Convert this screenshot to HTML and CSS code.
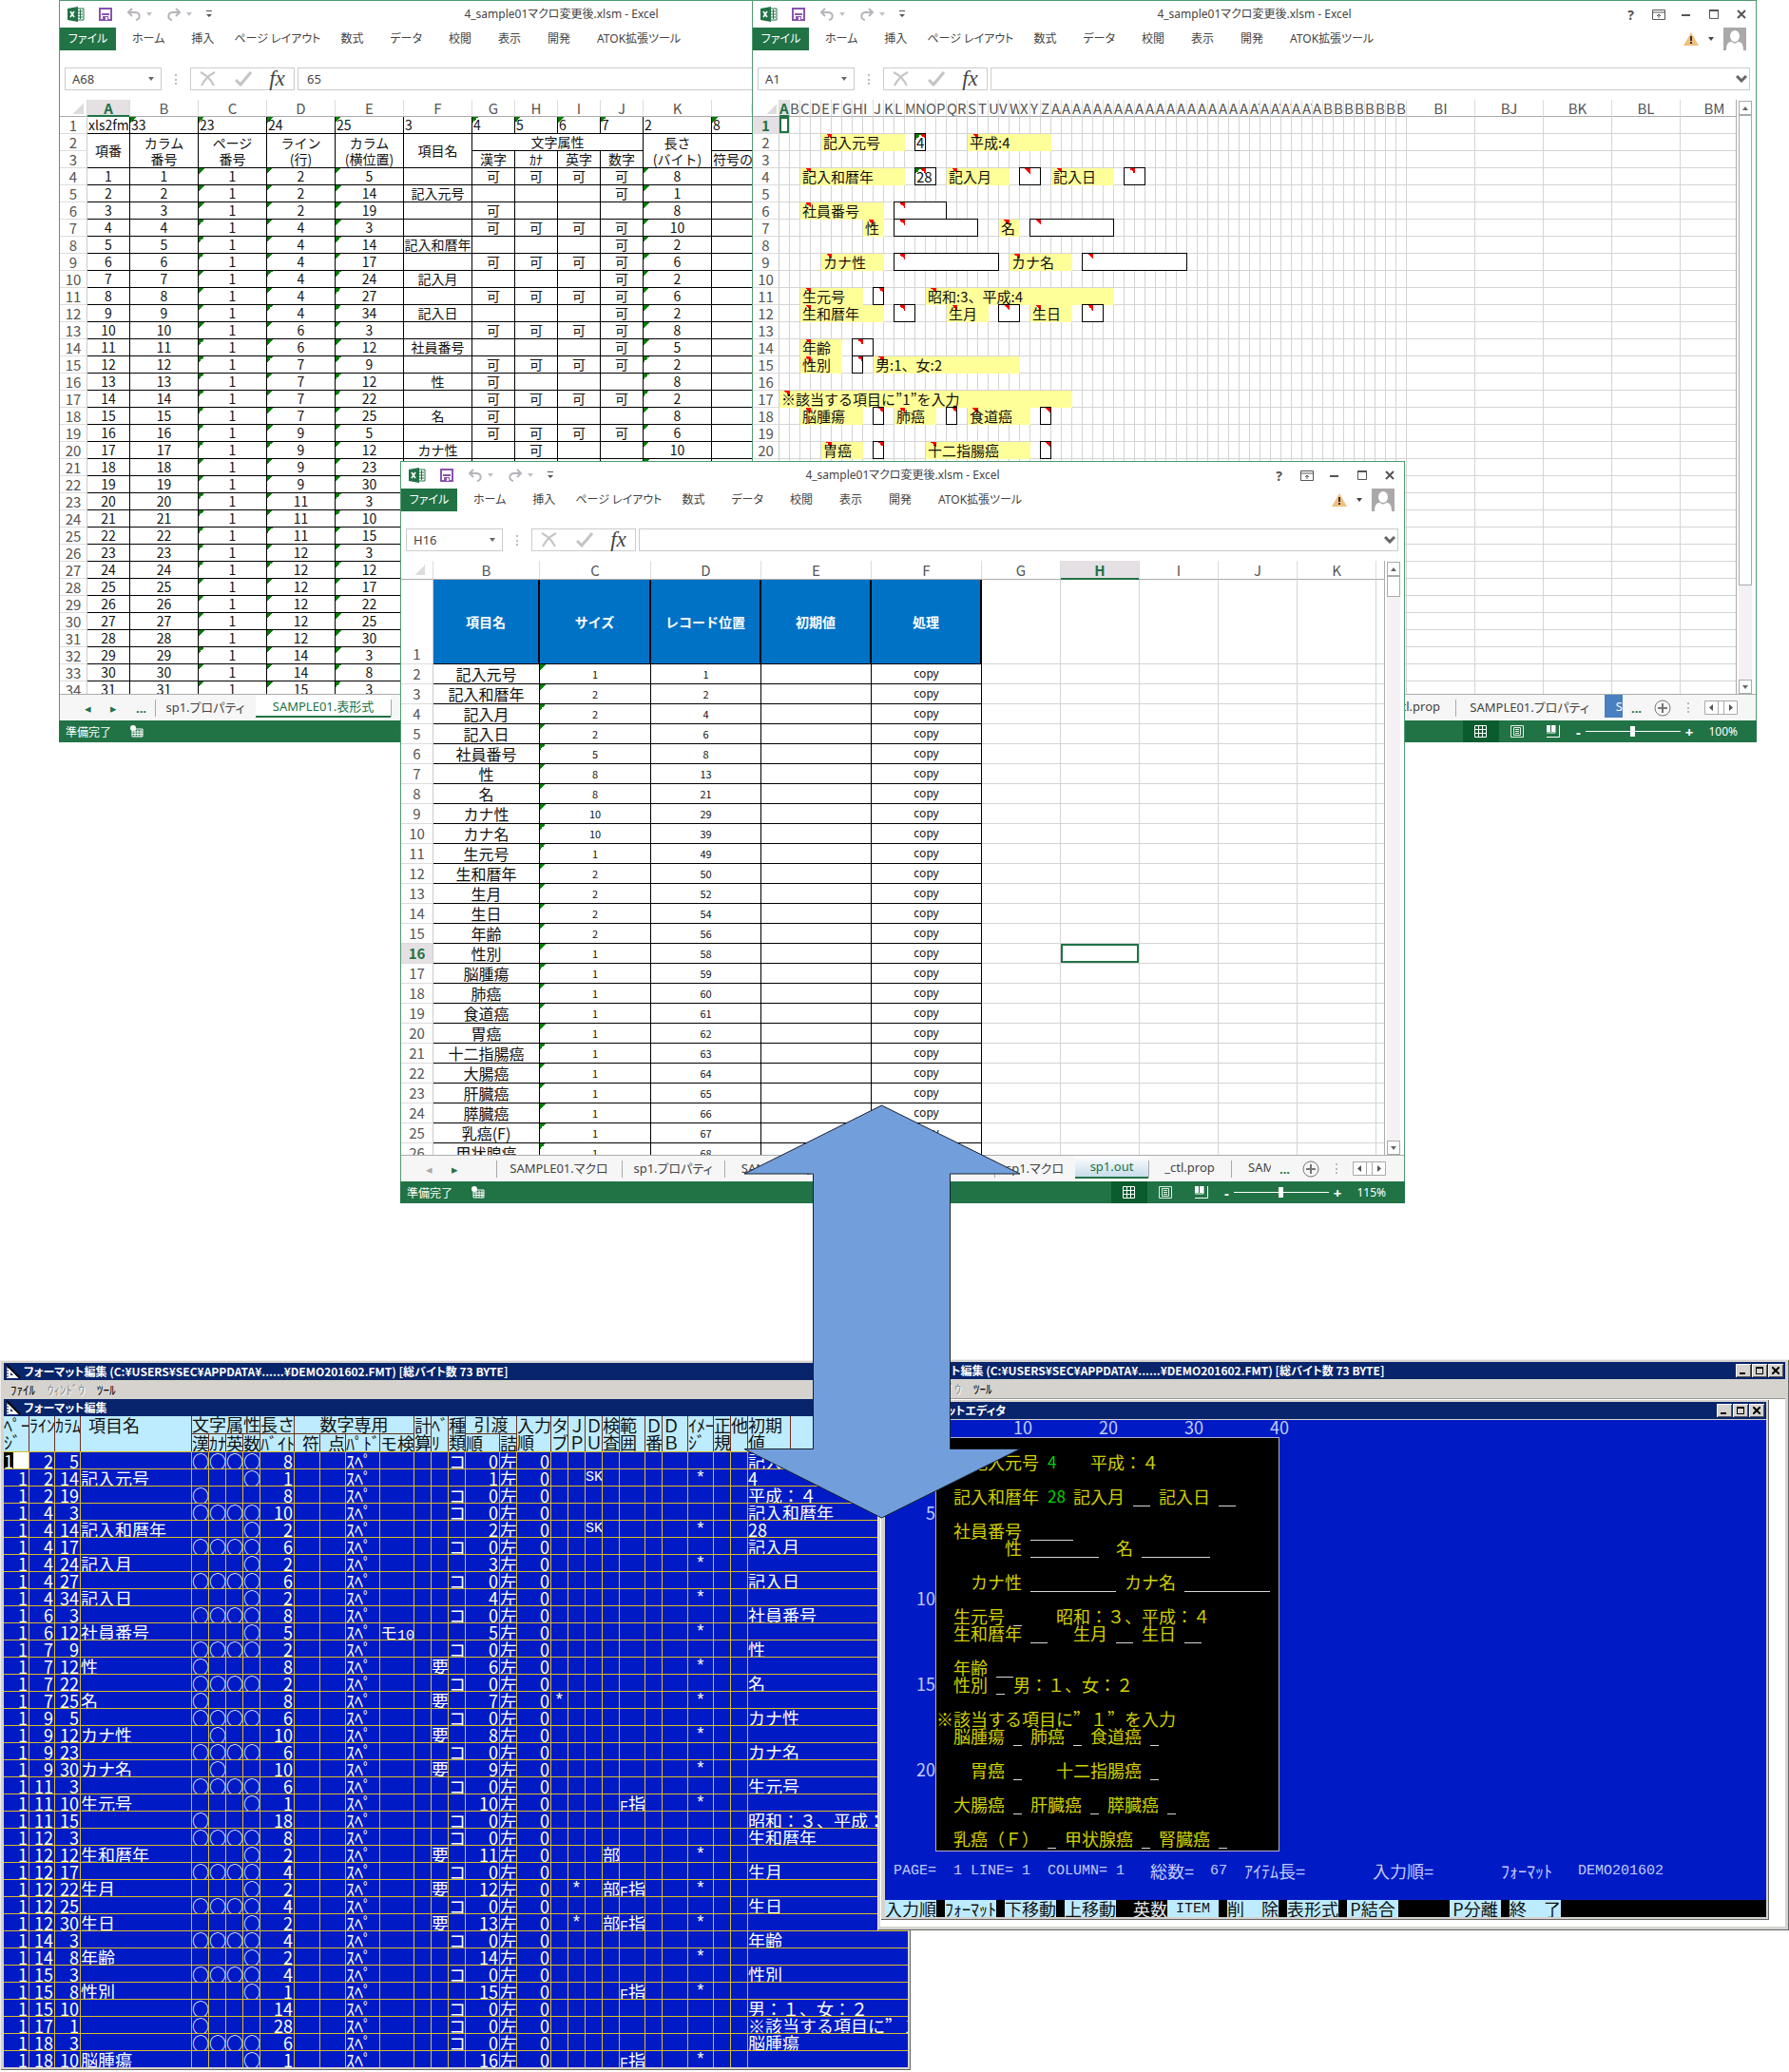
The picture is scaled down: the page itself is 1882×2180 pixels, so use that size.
FILE: index.html
```html
<!DOCTYPE html>
<html lang="ja">
<head>
<meta charset="utf-8">
<title>フォーマット編集と Excel シート</title>
<link rel="stylesheet" href="styles.css">
</head>
<body>
<svg class="defs" aria-hidden="true">
  <symbol id="i-excel" viewBox="0 0 18 16"><path d="M10 2h7v12h-7z" fill="#fff" stroke="#217346"/><path d="M11 5h5M11 8h5M11 11h5M13.500 3v10" stroke="#217346" fill="none"/><path d="M0 2l11-2v16L0 14z" fill="#217346"/><path d="M3 5l4 6M7 5l-4 6" stroke="#fff" stroke-width="1.600"/></symbol>
  <symbol id="i-save" viewBox="0 0 14 14"><path d="M1 1h12v12H1z" fill="#fff" stroke="#8a52b0" stroke-width="2"/><path d="M3 7h8" stroke="#8a52b0" stroke-width="2"/><path d="M4 9h6v4H4z" fill="#8a52b0"/><path d="M7 10h2v3H7z" fill="#fff"/></symbol>
  <symbol id="i-undo" viewBox="0 0 16 14"><path d="M6 1L2 5l4 4M2 5h7c6 0 6 7 1 8" fill="none" stroke="#b8b3ba" stroke-width="2"/></symbol>
  <symbol id="i-redo" viewBox="0 0 16 14"><path d="M10 1l4 4-4 4M14 5H7c-6 0-6 7-1 8" fill="none" stroke="#b8b3ba" stroke-width="2"/></symbol>
  <symbol id="i-caret" viewBox="0 0 6 4"><path d="M0 0h6L3 4z" fill="currentColor"/></symbol>
  <symbol id="i-more" viewBox="0 0 6 8"><path d="M0 0h6v1H0zM0 4h6L3 7z" fill="#555"/></symbol>
  <symbol id="i-ribbon" viewBox="0 0 14 11"><path d="M.5.5h13v10H.5zM1 3h12M7 9V5M5 7l2-2 2 2" fill="none" stroke="#555"/></symbol>
  <symbol id="i-min" viewBox="0 0 10 10"><path d="M0 5h9v2H0z" fill="#555"/></symbol>
  <symbol id="i-max" viewBox="0 0 10 10"><path d="M.5.5h9v9h-9z" fill="none" stroke="#555"/><path d="M0 0h10v2H0z" fill="#555"/></symbol>
  <symbol id="i-close" viewBox="0 0 10 10"><path d="M1 1l8 8M9 1L1 9" stroke="#555" stroke-width="2"/></symbol>
  <symbol id="i-warn" viewBox="0 0 16 14"><path d="M8 0l8 14H0z" fill="#f0c080"/><path d="M7 4h2v5H7zM7 10h2v2H7z" fill="#333"/></symbol>
  <symbol id="i-user" viewBox="0 0 24 24"><path d="M0 0h24v24H0z" fill="#aaa8a8"/><ellipse cx="12" cy="9" rx="5" ry="6" fill="#fff"/><path d="M3 24c0-8 3-9 6-9 2 2 4 2 6 0 3 0 6 1 6 9z" fill="#fff"/></symbol>
  <symbol id="i-cancel" viewBox="0 0 18 16"><path d="M1 1c6 3 11 8 14 14M16 1C10 4 5 9 2 15" fill="none" stroke="#c4c4c4" stroke-width="2"/></symbol>
  <symbol id="i-check" viewBox="0 0 18 16"><path d="M1 9l5 5L17 1" fill="none" stroke="#c4c4c4" stroke-width="3"/></symbol>
  <symbol id="i-chev" viewBox="0 0 12 8"><path d="M1 1l5 5 5-5" fill="none" stroke="#666" stroke-width="3"/></symbol>
  <symbol id="i-macro" viewBox="0 0 14 13"><path d="M2 4h11v8H2z" fill="none" stroke="#fff"/><path d="M2 7h11M2 9.500h11M5 5v7M8 5v7M11 5v7" stroke="#fff"/><circle cx="3" cy="3" r="3" fill="#fff"/></symbol>
  <symbol id="i-grid" viewBox="0 0 14 13"><path d="M.5.5h12v12H.5zM0 4.500h13M0 8.500h13M4.500 0v13M8.500 0v13" fill="none" stroke="#fff"/></symbol>
  <symbol id="i-page" viewBox="0 0 14 13"><path d="M.5.5h13v12H.5zM3.500 2.500h7v8h-7zM5 4.500h4M5 6.500h4M5 8.500h4" fill="none" stroke="#e4f0e8"/></symbol>
  <symbol id="i-break" viewBox="0 0 14 13"><path d="M0 0h4v7H0zM5 0h4v7H5z" fill="#fff"/><path d="M0 12.500h13.500V0" fill="none" stroke="#fff"/><path d="M0 8h9v-8" fill="none" stroke="#fff"/></symbol>
  <symbol id="i-tri" viewBox="0 0 16 16"><path d="M1 1l14 14H1z" fill="#fff"/><path d="M1 1l14 14" stroke="#000" stroke-width="2"/><path d="M5 9l3 3H5z" fill="#0a246a"/><path d="M1 4h2M1 7h2M1 10h2M1 13h2" stroke="#000"/></symbol>
</svg>

<main class="desktop" id="desktop">
  <section class="app app-list" aria-label="フォーマット編集">
    <header class="app-title"><svg width="16" height="16"><use href="#i-tri"/></svg>フォーマット編集 (C:¥USERS¥SEC¥APPDATA¥......¥DEMO201602.FMT) [総バイト数 73 BYTE]</header>
    <nav class="app-menu"><button>ﾌｧｲﾙ</button><button disabled>ｳｨﾝﾄﾞｳ</button><button>ﾂｰﾙ</button></nav>
    <header class="app-title"><svg width="16" height="16"><use href="#i-tri"/></svg>フォーマット編集</header>
    <div class="list-view">
      <table class="fmt">
        <colgroup id="fmt-cols"></colgroup>
        <thead>
          <tr>
            <th rowspan="2">ﾍﾟｰ<br>ｼﾞ</th><th rowspan="2">ﾗｲﾝ</th><th rowspan="2">ｶﾗﾑ</th><th rowspan="2" class="name">項目名</th>
            <th colspan="4" class="under">文字属性</th><th class="under">長さ</th><th colspan="4" class="under mid">数字専用</th>
            <th rowspan="2">計<br>算</th><th rowspan="2">ﾍﾞ<br>ﾘ</th><th rowspan="2">種<br>類</th>
            <th colspan="2" class="under mid">引渡</th><th rowspan="2">入力<br>順</th>
            <th rowspan="2">タ<br>ブ</th><th rowspan="2">Ｊ<br>Ｐ</th><th rowspan="2">Ｄ<br>Ｕ</th><th rowspan="2">検<br>査</th><th rowspan="2">範<br>囲</th>
            <th rowspan="2">Ｄ<br>番</th><th rowspan="2">Ｄ<br>Ｂ</th><th rowspan="2">ｲﾒｰ<br>ｼﾞ</th><th rowspan="2">正<br>規</th><th rowspan="2">他</th><th rowspan="2">初期<br>値</th><th rowspan="2"></th>
          </tr>
          <tr><th>漢</th><th>ｶﾅ</th><th>英</th><th>数</th><th>ﾊﾞｲﾄ</th><th class="end">符</th><th class="end">点</th><th>ﾊﾟﾄﾞ</th><th>モ検</th><th>順</th><th>詰</th></tr>
        </thead>
        <tbody id="fmt-rows"></tbody>
      </table>
    </div>
  </section>

  <section class="app app-editor" aria-label="フォーマットエディタ">
    <header class="app-title"><svg width="16" height="16"><use href="#i-tri"/></svg>フォーマット編集 (C:¥USERS¥SEC¥APPDATA¥......¥DEMO201602.FMT) [総バイト数 73 BYTE]
      <span class="win-btns"><button aria-label="最小化"><svg width="8" height="8"><path d="M0 6h6v2H0z"/></svg></button><button aria-label="最大化"><svg width="8" height="8"><path d="M0 0h8v8H0zM1 2v5h6V2z" fill-rule="evenodd"/></svg></button><button aria-label="閉じる"><svg width="8" height="8"><path d="M0 0l8 8M8 0L0 8" stroke="#000" stroke-width="2"/></svg></button></span>
    </header>
    <nav class="app-menu"><button>ﾌｧｲﾙ</button><button disabled>ｳｨﾝﾄﾞｳ</button><button>ﾂｰﾙ</button></nav>
    <div class="mdi">
      <div class="child">
        <header class="app-title"><svg width="16" height="16"><use href="#i-tri"/></svg>フォーマットエディタ
          <span class="win-btns"><button aria-label="最小化"><svg width="8" height="8"><path d="M0 6h6v2H0z"/></svg></button><button aria-label="最大化"><svg width="8" height="8"><path d="M0 0h8v8H0zM1 2v5h6V2z" fill-rule="evenodd"/></svg></button><button aria-label="閉じる"><svg width="8" height="8"><path d="M0 0l8 8M8 0L0 8" stroke="#000" stroke-width="2"/></svg></button></span>
        </header>
        <div class="screen">
          <div class="ruler" id="ruler"></div>
          <div class="editor"><div class="lines" id="lines"></div><div class="canvas" id="canvas"></div></div>
          <div class="info" id="info"></div>
          <div class="keys" id="keys"></div>
        </div>
      </div>
    </div>
  </section>

  <svg class="arrow" width="292" height="436" viewBox="0 0 292 436" role="img" aria-label="双方向の矢印"><path d="M145.500 1L291 73H217.500V362.500H291L145.500 435 1 362.500H73.500V73H1z" fill="#729fdc" stroke="#16202e"/></svg>
</main>

<template id="excel">
  <section class="xl">
    <header class="xl-title">
      <div class="qat">
        <svg width="18" height="16"><use href="#i-excel"/></svg>
        <button class="save" aria-label="上書き保存"><svg width="14" height="14"><use href="#i-save"/></svg></button>
        <button aria-label="元に戻す"><svg width="16" height="14"><use href="#i-undo"/></svg><svg class="pale" width="6" height="4"><use href="#i-caret"/></svg></button>
        <button aria-label="やり直し"><svg width="16" height="14"><use href="#i-redo"/></svg><svg class="pale" width="6" height="4"><use href="#i-caret"/></svg></button>
        <button aria-label="カスタマイズ"><svg width="6" height="8"><use href="#i-more"/></svg></button>
      </div>
      <h1>4_sample01マクロ変更後.xlsm - Excel</h1>
      <div class="xl-btns"><button aria-label="ヘルプ">?</button><button aria-label="リボン表示"><svg width="14" height="11"><use href="#i-ribbon"/></svg></button><button aria-label="最小化"><svg width="10" height="10"><use href="#i-min"/></svg></button><button aria-label="最大化"><svg width="10" height="10"><use href="#i-max"/></svg></button><button aria-label="閉じる"><svg width="10" height="10"><use href="#i-close"/></svg></button></div>
    </header>
    <nav class="ribbon">
      <button class="file">ファイル</button><button>ホーム</button><button>挿入</button><button class="tight">ページ レイアウト</button><button>数式</button><button>データ</button><button>校閲</button><button>表示</button><button>開発</button><button>ATOK拡張ツール</button>
      <span class="account"><svg width="16" height="14"><use href="#i-warn"/></svg><svg class="drop" width="6" height="4"><use href="#i-caret"/></svg><svg width="24" height="24"><use href="#i-user"/></svg></span>
    </nav>
    <div class="fbar">
      <label class="namebox"><input aria-label="名前ボックス"><svg width="6" height="4"><use href="#i-caret"/></svg></label>
      <span class="dots"></span>
      <div class="fbtns"><button aria-label="キャンセル"><svg width="18" height="16"><use href="#i-cancel"/></svg></button><button aria-label="入力"><svg width="18" height="16"><use href="#i-check"/></svg></button><button class="fx">fx</button></div>
      <label class="formula"><input aria-label="数式バー"><svg width="12" height="8"><use href="#i-chev"/></svg></label>
    </div>
    <div class="grid">
      <div class="sheet"><table></table></div>
      <div class="vscroll"><button aria-label="上へ"><svg class="flip" width="6" height="4"><use href="#i-caret"/></svg></button><i></i><button aria-label="下へ"><svg width="6" height="4"><use href="#i-caret"/></svg></button></div>
    </div>
    <div class="tabs">
      <span class="tabnav"><span class="prev">◂</span><span>▸</span><b></b></span>
      <div class="tablist"></div>
      <span class="tabend"><b>...</b><svg width="18" height="18" viewBox="0 0 18 18"><circle cx="9" cy="9" r="8" fill="none" stroke="#777"/><path d="M9 4v10M4 9h10" stroke="#777" stroke-width="2"/></svg><span class="dots"></span><svg width="35" height="15" viewBox="0 0 35 15"><path d="M.5.5h34v14H.5zM14.500 0v15M20.500 0v15" fill="#fff" stroke="#aaa"/><path d="M9 4v7L5 7.500zM26 4v7l4-3.500z" fill="#555"/></svg></span>
    </div>
    <footer class="status">
      <span>準備完了</span><svg width="14" height="13"><use href="#i-macro"/></svg>
      <span class="views"><button class="on" aria-label="標準"><svg width="14" height="13"><use href="#i-grid"/></svg></button><button aria-label="ページ レイアウト"><svg width="14" height="13"><use href="#i-page"/></svg></button><button aria-label="改ページ"><svg width="14" height="13"><use href="#i-break"/></svg></button></span>
      <span class="zoom"><b>-</b><input type="range" min="0" max="100" value="50" aria-label="ズーム"><b>+</b><output></output></span>
    </footer>
  </section>
</template>
<script src="main.js"></script>
</body>
</html>
```
FILE: styles.css
```css
* { box-sizing: border-box; }
body { margin: 0; background: #fff; font-family: "Noto Sans CJK JP", sans-serif; color: #222; }
button, input { font: inherit; color: inherit; margin: 0; padding: 0; border: 0; background: none; border-radius: 0; }
svg { display: block; flex: none; }
table { border-collapse: separate; border-spacing: 0; table-layout: fixed; width: 0; }
td, th { padding: 0; font-weight: 400; overflow: hidden; white-space: nowrap; }
.defs { display: none; }
.desktop { position: relative; min-height: 2180px; overflow: hidden; }

/* Excel windows */
.xl { position: absolute; width: 1057px; height: 781px; display: flex; flex-direction: column; background: #fff; border: 1px solid #4f9a72; border-bottom: 0; font-family: "Noto Sans", "Noto Sans CJK JP", sans-serif; font-feature-settings: "palt"; font-size: 12px; color: #444; }
.xl.w1 { left: 62px; top: 0; }
.xl.w2 { left: 791px; top: 0; }
.xl.w3 { left: 421px; top: 485px; }
.xl-title { display: grid; grid-template-columns: 1fr auto 1fr; height: 28px; align-items: center; }
.xl-title h1 { margin: 0; font-size: 12px; font-weight: 400; line-height: 20px; }
.qat { display: flex; align-items: center; padding-left: 8px; gap: 15px; }
.qat button { display: flex; align-items: center; gap: 5px; }
.pale { color: #c4bfc6; }
.xl-btns { display: flex; justify-content: flex-end; padding-right: 1px; }
.xl-btns button { width: 29px; height: 20px; display: flex; align-items: center; justify-content: center; font-weight: 700; font-size: 14px; color: #555; }
.ribbon { display: flex; height: 24px; line-height: 24px; }
.ribbon button { padding: 0 14px; white-space: nowrap; }
.ribbon .file { width: 59px; padding: 0; margin-right: 3px; background: #217346; color: #fff; }
.ribbon .tight { padding: 0 7px; }
.account { margin-left: auto; display: flex; align-items: center; gap: 10px; padding-right: 10px; }
.fbar { display: flex; height: 24px; margin-top: 18px; padding: 0 6px 0 5px; font-size: 13px; }
.namebox, .formula, .fbtns { display: flex; align-items: center; border: 1px solid #ccc; }
.namebox { width: 102px; padding: 0 7px; color: #666; }
.namebox input, .formula input { flex: 1; min-width: 0; width: 0; color: #444; }
.dots { width: 30px; display: flex; justify-content: center; align-items: center; }
.dots::before { content: ""; height: 11px; border-left: 2px dotted #bbb; }
.fbtns { width: 110px; justify-content: space-around; margin-right: 3px; }
.fx { font: italic 400 23px/20px "Liberation Serif", serif; color: #444; }
.formula { flex: 1; padding: 0 2px 0 9px; }
.grid { flex: 1; min-height: 0; display: flex; margin-top: 10px; }
.sheet { flex: 1; min-width: 0; overflow: hidden; border-right: 1px solid #ababab; font-family: "Noto Sans CJK JP", sans-serif; font-feature-settings: normal; }
.vscroll { width: 20px; padding: 1px 4px 0 2px; display: flex; flex-direction: column; }
.vscroll button { height: 15px; border: 1px solid #aaa; display: flex; align-items: center; justify-content: center; background: #fff; color: #666; }
.vscroll i { flex: 1; background: #f4f0f4; }
.vscroll i::before { content: ""; display: block; height: 20px; background: #fff; border: 1px solid #aaa; }
.w2 .vscroll i::before { height: 83%; }
.flip { transform: rotate(180deg); }
.tabs { height: 28px; display: flex; background: #f6f6f6; border-top: 1px solid #ababab; font-size: 13px; }
.tabnav { width: 100px; display: flex; align-items: center; padding-left: 26px; gap: 20px; color: #217346; }
.w3 .prev { color: #aaa; }
.tablist { flex: 1; min-width: 0; display: flex; overflow: hidden; }
.tablist button { flex: none; height: 24px; white-space: nowrap; background: linear-gradient(#aaa, #aaa) 0 5px / 1px 18px no-repeat; }
.tablist button.cut { text-align: right; padding-right: 16px; overflow: hidden; }
.tablist button.edge { text-align: left; padding-left: 18px; overflow: hidden; }
.tablist .on { color: #217346; background: #fff; border-bottom: 2px solid #217346; }
.w3 .tablist .on { background: linear-gradient(#fff, #c8dcea); }
.tablist .blue { background: #4a80c0; color: #fff; margin-left: 1px; text-align: right; }
.w2 .tablist { justify-content: flex-end; }
.tabend { width: 140px; display: flex; align-items: center; padding-left: 9px; color: #217346; }
.tabend b { width: 24px; }
.tabend .dots { width: 35px; }
.status { height: 23px; margin: 0 -1px; display: flex; align-items: center; background: #217346; color: #fff; padding-left: 7px; gap: 20px; }
.views { margin-left: auto; display: flex; height: 23px; }
.views button { width: 38px; display: flex; align-items: center; justify-content: center; }
.views .on { background: #0a5c2e; }
.zoom { display: flex; align-items: center; gap: 5px; width: 190px; margin-left: -15px; }
.zoom b { font-size: 15px; line-height: 20px; }
.zoom output { margin-left: 11px; }
.zoom input { appearance: none; width: 100px; height: 11px; background: linear-gradient(#fff, #fff) 0 5px / 100% 1px no-repeat; }
.zoom input::-webkit-slider-thumb { appearance: none; width: 5px; height: 11px; background: #fff; }

/* sheets */
.sheet thead th { height: 18px; line-height: 17px; font-size: 15px; border-right: 1px solid #dcdcdc; border-bottom: 1px solid #ababab; color: #555; }
.sheet thead th.sel, .sheet tbody th.sel { background: #e4e0e4; color: #217346; font-weight: 700; }
.sheet thead th.sel { border-bottom-color: #217346; box-shadow: inset 0 -1px #217346; }
.sheet thead th:first-child { background: linear-gradient(135deg, transparent 50%, #dcdcdc 50%) 14px 4px / 11px 11px no-repeat; }
.sheet tbody th { font-size: 15px; line-height: 17px; border-right: 1px solid #ccc; border-bottom: 1px solid #dcdcdc; color: #555; }
.sheet td { line-height: 17px; height: 18px; font-size: 14px; text-align: center; color: #111; border-right: 1px solid #d4d4d4; border-bottom: 1px solid #d4d4d4; background-repeat: no-repeat; }
.sheet .bk { border-color: #000; }
.sheet .left { text-align: left; padding-left: 1px; }
.sheet .tri { background-image: linear-gradient(135deg, #008000 50%, transparent 50%); background-size: 6px 6px; }
.w2 .sheet thead th { text-align: left; }
.w2 .sheet thead th.wide { text-align: center; }
.w2 .sheet td { font-size: 15px; text-align: left; }
.w2 .sheet .note { background: #ffff99 linear-gradient(225deg, #f00 50%, transparent 50%) 5px 0 / 6px 6px no-repeat; border-color: #ffff99; padding-left: 2px; }
.w2 .sheet .box { background: #fff linear-gradient(225deg, #f00 50%, transparent 50%) 5px 0 / 6px 6px no-repeat; border-color: #000; box-shadow: -1px 0 #000, 0 -1px #000, -1px -1px #000; padding-left: 1px; }
.w2 .sheet .given { background: linear-gradient(135deg, #008000 50%, transparent 50%) 0 0 / 6px 6px no-repeat, #fff linear-gradient(225deg, #f00 50%, transparent 50%) 5px 0 / 6px 6px no-repeat; }
.w2 .sheet .cur { box-shadow: inset 0 0 0 2px #217346; }
.w3 .sheet thead th { height: 20px; line-height: 19px; }
.w3 .sheet tbody th { font-size: 15px; line-height: 20px; vertical-align: bottom; }
.w3 .sheet td { font-size: 11px; line-height: 20px; }
.w3 .sheet td.nm { font-size: 16px; }
.w3 .sheet td.cp { font-family: "Noto Sans", sans-serif; font-size: 12px; }
.w3 .sheet .hd { height: 89px; background: #0072c6; color: #fff; font-size: 14px; font-weight: 700; border-right-width: 2px; }
.w3 .sheet .cur { box-shadow: inset 0 0 0 2px #217346; }

/* format editor windows */
.app { position: absolute; background: #d6d3ce; box-shadow: inset 1px 1px #eee, inset -1px -1px #666; }
.app-list { left: 0; top: 1431px; width: 958px; padding: 3px 3px 3px 4px; }
.app-editor { left: 923px; right: 0; top: 1430px; padding: 3px 4px 4px 3px; }
.app-title { display: flex; align-items: center; height: 18px; padding-left: 2px; gap: 3px; background: #08246b; color: #fff; font-size: 12px; font-weight: 700; line-height: 18px; white-space: nowrap; overflow: hidden; font-feature-settings: "palt"; }
.app-menu { display: flex; height: 20px; gap: 13px; padding-left: 7px; font-size: 13px; line-height: 18px; color: #000; }
.app-menu button:disabled { color: #8c8c8c; text-shadow: 1px 1px #fff; }
.list-view { overflow: hidden; background: #001bc6; }
.fmt th { font-size: 18px; background: #bdebff; color: #111; height: 18px; line-height: 18px; text-align: left; vertical-align: top; border-right: 1px solid #6b3020; }
.fmt th.under { border-bottom: 1px solid #6b3020; height: 19px; line-height: 17px; }
.fmt th.mid { text-align: center; }
.fmt th.end { text-align: right; }
.fmt th.name { padding-left: 8px; }
.fmt td { font-size: 18px; height: 18px; line-height: 16px; color: #fff; border-right: 1px solid #d8be28; border-top: 1px solid #d8be28; }
.fmt td.r { text-align: right; padding-right: 1px; }
.fmt td.c { text-align: center; font-family: "Liberation Mono", monospace; }
.fmt .mono { font-family: "Liberation Mono", monospace; font-size: 15px; }
.fmt span.mono { line-height: 0; }
.fmt .page { background: linear-gradient(90deg, #000 10px, #fff 10px); text-align: left; }
.wide-quotes { font-feature-settings: "fwid"; }
.win-btns { margin-left: auto; display: flex; gap: 1px; padding-right: 2px; }
.win-btns button { width: 16px; height: 14px; display: flex; align-items: center; justify-content: center; background: #d6d3ce; box-shadow: inset 1px 1px #fff, inset -1px -1px #555; }
.mdi { background: #fff; padding: 1px 17px 7px 1px; border-top: 1px solid #999; }
.child { background: #d6d3ce; padding: 2px 3px 3px 4px; box-shadow: inset -1px -1px #666; }
.screen { background: #001bc6; margin-top: 1px; color: #c0ccff; font-size: 18px; line-height: 15px; overflow: hidden; }
.ruler { display: grid; grid-template-columns: repeat(41, 9px); grid-template-rows: 18px; padding-left: 54px; }
.ruler span { text-align: center; white-space: nowrap; }
.editor { display: flex; }
.lines { width: 53px; display: grid; grid-template-rows: repeat(24, 18px); text-align: right; }
.canvas { display: grid; grid-template-columns: repeat(40, 9px); grid-template-rows: repeat(24, 18px); background: #000; border: 1px solid #b0b0d0; padding-bottom: 2px; color: #d0d000; white-space: nowrap; line-height: 14px; }
.canvas .val { color: #00d000; font-size: 17px; }
.canvas .blank { border-bottom: 1px solid #d8d8d8; }
.info { display: grid; grid-template-columns: repeat(100, 9px); padding-left: 9px; margin-top: 13px; white-space: nowrap; overflow: hidden; grid-template-rows: 18px; }
.info .mono, .keys .mono { font-family: "Liberation Mono", monospace; font-size: 15px; }
.keys { display: grid; grid-template-columns: repeat(100, 9px); grid-template-rows: 18px; background: #000; margin-top: 20px; overflow: hidden; }
.keys button { background: #bdebff; color: #111; line-height: 17px; white-space: nowrap; overflow: hidden; text-align: center; }
.keys .mode { background: #000; color: #e8e8e8; }
.arrow { position: absolute; left: 782px; top: 1162px; }
```
FILE: main.js
```js
// line, column, name, 漢カナ英数 flags, bytes, order, extra columns, initial value
const items = [
  [2, 5, '', '1111', 8, 0, {}, '記入元号'], [2, 14, '記入元号', '0001', 1, 1, {du: 'SK', im: '*'}, '4'],
  [2, 19, '', '1000', 8, 0, {}, '平成：４'], [4, 3, '', '1111', 10, 0, {}, '記入和暦年'],
  [4, 14, '記入和暦年', '0001', 2, 2, {du: 'SK', im: '*'}, '28'], [4, 17, '', '1111', 6, 0, {}, '記入月'],
  [4, 24, '記入月', '0001', 2, 3, {im: '*'}, ''], [4, 27, '', '1111', 6, 0, {}, '記入日'],
  [4, 34, '記入日', '0001', 2, 4, {im: '*'}, ''], [6, 3, '', '1111', 8, 0, {}, '社員番号'],
  [6, 12, '社員番号', '0001', 5, 5, {mo: 'モ<span class="mono">10</span>', im: '*'}, ''], [7, 9, '', '1111', 2, 0, {}, '性'],
  [7, 12, '性', '1000', 8, 6, {must: 1, im: '*'}, ''], [7, 22, '', '1111', 2, 0, {}, '名'],
  [7, 25, '名', '1000', 8, 7, {must: 1, tab: '*', im: '*'}, ''], [9, 5, '', '1111', 6, 0, {}, 'カナ性'],
  [9, 12, 'カナ性', '0100', 10, 8, {must: 1, im: '*'}, ''], [9, 23, '', '1111', 6, 0, {}, 'カナ名'],
  [9, 30, 'カナ名', '0100', 10, 9, {must: 1, im: '*'}, ''], [11, 3, '', '1111', 6, 0, {}, '生元号'],
  [11, 10, '生元号', '0001', 1, 10, {rg: 1, im: '*'}, ''], [11, 15, '', '1000', 18, 0, {}, '昭和：３、平成：４'],
  [12, 3, '', '1111', 8, 0, {}, '生和暦年'], [12, 12, '生和暦年', '0001', 2, 11, {must: 1, ck: '部', im: '*'}, ''],
  [12, 17, '', '1111', 4, 0, {}, '生月'], [12, 22, '生月', '0001', 2, 12, {must: 1, jp: '*', ck: '部', rg: 1, im: '*'}, ''],
  [12, 25, '', '1111', 4, 0, {}, '生日'], [12, 30, '生日', '0001', 2, 13, {must: 1, jp: '*', ck: '部', rg: 1, im: '*'}, ''],
  [14, 3, '', '1111', 4, 0, {}, '年齢'], [14, 8, '年齢', '0001', 2, 14, {im: '*'}, ''],
  [15, 3, '', '1111', 4, 0, {}, '性別'], [15, 8, '性別', '0001', 1, 15, {rg: 1, im: '*'}, ''],
  [15, 10, '', '1000', 14, 0, {}, '男：１、女：２'], [17, 1, '', '1000', 28, 0, {}, '※該当する項目に”１”を入力'],
  [18, 3, '', '1111', 6, 0, {}, '脳腫瘍'], [18, 10, '脳腫瘍', '0001', 1, 16, {rg: 1, im: '*'}, '']
];
// row -> [column, width, label]; a null label is an entry field
const form = {
  2: [[4, 8, '記入元号'], [13, 1, null, '4'], [18, 8, '平成：４']],
  4: [[2, 10, '記入和暦年'], [13, 2, null, '28'], [16, 6, '記入月'], [23, 2, null], [26, 6, '記入日'], [33, 2, null]],
  6: [[2, 8, '社員番号'], [11, 5, null]],
  7: [[8, 2, '性'], [11, 8, null], [21, 2, '名'], [24, 8, null]],
  9: [[4, 6, 'カナ性'], [11, 10, null], [22, 6, 'カナ名'], [29, 10, null]],
  11: [[2, 6, '生元号'], [9, 1, null], [14, 18, '昭和：３、平成：４']],
  12: [[2, 8, '生和暦年'], [11, 2, null], [16, 4, '生月'], [21, 2, null], [24, 4, '生日'], [29, 2, null]],
  14: [[2, 4, '年齢'], [7, 2, null]],
  15: [[2, 4, '性別'], [7, 1, null], [9, 14, '男：１、女：２']],
  17: [[0, 28, '※該当する項目に”１”を入力']],
  18: [[2, 6, '脳腫瘍'], [9, 1, null], [11, 4, '肺癌'], [16, 1, null], [18, 6, '食道癌'], [25, 1, null]],
  20: [[4, 4, '胃癌'], [9, 1, null], [14, 10, '十二指腸癌'], [25, 1, null]],
  22: [[2, 6, '大腸癌'], [9, 1, null], [11, 6, '肝臓癌'], [18, 1, null], [20, 6, '膵臓癌'], [27, 1, null]],
  24: [[2, 10, '乳癌（Ｆ）'], [13, 1, null], [15, 8, '甲状腺癌'], [24, 1, null], [26, 6, '腎臓癌'], [33, 1, null]]
};
const records = [['記入元号', 1], ['記入和暦年', 2], ['記入月', 2], ['記入日', 2], ['社員番号', 5], ['性', 8], ['名', 8],
  ['カナ性', 10], ['カナ名', 10], ['生元号', 1], ['生和暦年', 2], ['生月', 2], ['生日', 2], ['年齢', 2], ['性別', 1],
  ['脳腫瘍', 1], ['肺癌', 1], ['食道癌', 1], ['胃癌', 1], ['十二指腸癌', 1], ['大腸癌', 1], ['肝臓癌', 1], ['膵臓癌', 1],
  ['乳癌(F)', 1], ['甲状腺癌', 1]];

const cols = widths => widths.map(w => `<col style="width:${w}px">`).join('');
const td = (text, cls = '', attr = '') => `<td class="${cls}" ${attr}>${text ?? ''}</td>`;
const head = (names, sel) => '<thead><tr><th></th>' + names.map(n => `<th class="${n === sel ? 'sel' : ''} ${n[0] === 'B' && n > 'BH' ? 'wide' : ''}">${n}</th>`).join('') + '</tr></thead>';

function listSheet() {
  const t = 'bk tri';
  const r1 = ['xls2fmt', 33, 23, 24, 25, 3, 4, 5, 6, 7, 2, 8].map((v, i) => td(v, 'left bk' + ([0, 5, 10].includes(i) ? '' : ' tri'))).join('');
  let h = cols([29, 45, 72, 72, 72, 72, 72, 45, 45, 45, 45, 72, 90]) + head([...'ABCDEFGHIJKL'], 'A') + '<tbody><tr><th>1</th>' + r1 + '</tr>';
  h += '<tr><th>2</th>' + td('項番', 'bk', 'rowspan="2"') + ['カラム<br>番号', 'ページ<br>番号', 'ライン<br>(行)', 'カラム<br>(横位置)', '項目名'].map(v => td(v, 'bk', 'rowspan="2"')).join('')
    + td('文字属性', 'bk', 'colspan="4"') + td('長さ<br>(バイト)', 'bk', 'rowspan="2"') + td('', 'bk') + '</tr>';
  h += '<tr><th>3</th>' + ['漢字', 'ｶﾅ', '英字', '数字'].map(v => td(v, 'bk')).join('') + td('符号の有無', 'left bk') + '</tr>';
  items.slice(0, 32).forEach((it, i) => {
    h += `<tr><th>${i + 4}</th>` + td(i + 1, 'bk') + td(i + 1, 'bk') + td(1, t) + td(it[0], t) + td(it[1], t) + td(it[2], 'bk')
      + [...it[3]].map(f => td(f === '1' ? '可' : '', 'bk')).join('') + td(it[4], t) + td('', 'bk') + '</tr>';
  });
  return h + '</tbody>';
}

function formSheet() {
  const names = [];
  for (let i = 0; i < 65; i++) names.push((i < 26 ? '' : String.fromCharCode(64 + Math.floor(i / 26))) + String.fromCharCode(65 + i % 26));
  let h = cols([28, ...Array(60).fill(11), 72, 72, 72, 72, 72]) + head(names, 'A') + '<tbody>';
  for (let r = 1; r <= 34; r++) {
    h += `<tr><th class="${r === 1 ? 'sel' : ''}">${r}</th>`;
    const spans = form[r] || [];
    for (let c = 0; c < 65;) {
      const s = spans.find(f => f[0] === c);
      if (s) {
        h += td(s[2] ? s[2].normalize('NFKC') : s[3], s[2] ? 'note' : s[3] ? 'box given' : 'box', `colspan="${s[1]}"`);
        c += s[1];
      } else { h += td('', r === 1 && c === 0 ? 'cur' : ''); c++; }
    }
    h += '</tr>';
  }
  return h + '</tbody>';
}

function recordSheet() {
  let pos = 1;
  const rest = row => [...'GHIJKL'].map(c => td('', row === 16 && c === 'H' ? 'cur' : '')).join('');
  let h = cols([34, 112, 117, 116, 116, 116, 83, 83, 83, 83, 83, 83]) + head([...'BCDEFGHIJKL'], 'H') + '<tbody><tr><th>1</th>'
    + ['項目名', 'サイズ', 'レコード位置', '初期値', '処理'].map(v => td(v, 'hd bk')).join('') + rest(1) + '</tr>';
  records.forEach(([n, size], i) => {
    h += `<tr><th class="${i + 2 === 16 ? 'sel' : ''}">${i + 2}</th>` + td(n, 'nm bk') + td(size, 'bk tri') + td(pos, 'bk') + td('', 'bk') + td('copy', 'cp bk') + rest(i + 2) + '</tr>';
    pos += size;
  });
  return h + '</tbody>';
}

function excel(cls, cell, value, table, tabs, zoom, more) {
  const w = document.getElementById('excel').content.cloneNode(true);
  const q = s => w.querySelector(s);
  q('.xl').classList.add(cls);
  q('.namebox input').value = cell;
  q('.formula input').value = value;
  q('.sheet table').innerHTML = table;
  q('.tabnav b').textContent = more;
  q('.tablist').innerHTML = tabs.map(([n, width, c = '']) => `<button class="${c}" style="width:${width}px">${n}</button>`).join('');
  q('output').value = zoom;
  desktop.insertBefore(w, document.querySelector('.app-list'));
}
excel('w1', 'A68', '65', listSheet(), [['sp1.プロパティ', 106], ['SAMPLE01.表形式', 142, 'on'], ['', 60]], '100%', '...');
excel('w2', 'A1', '', formSheet(), [['_ctl.prop', 87, 'cut'], ['SAMPLE01.プロパティ', 156], ['S', 19, 'blue']], '100%', '...');
excel('w3', 'H16', '', recordSheet(), [['SAMPLE01.マクロ', 132], ['sp1.プロパティ', 108], ['SAMPLE01.表形式', 142], ['', 142], ['sp1.マクロ', 85], ['sp1.out', 77, 'on'], ['_ctl.prop', 87], ['SAM', 43, 'edge']], '115%', '');

const put = (id, html) => { document.getElementById(id).innerHTML = html; };
put('fmt-cols', cols([27, 27, 27, 117, 18, 18, 18, 18, 36, 27, 27, 36, 36, 18, 18, 18, 36, 18, 36, 18, 18, 18, 18, 27, 18, 27, 27, 18, 18, 45, 125]));
put('fmt-rows', items.map((it, i) => {
  const x = it[6];
  return '<tr>' + td(1, i ? 'r' : 'page') + td(it[0], 'r') + td(it[1], 'r') + td(it[2]) + [...it[3]].map(f => td(f === '1' ? '○' : '')).join('')
    + td(it[4], 'r') + td('') + td('') + td('ｽﾍﾟ') + td(x.mo) + td('') + td(x.must ? '要' : '') + td(it[2] ? '' : 'コ') + td(it[5], 'r') + td('左') + td(0, 'r')
    + td(x.tab, 'c') + td(x.jp, 'c') + td(x.du, 'mono') + td(x.ck) + td(x.rg ? '<span class="mono">F</span>指' : '') + td('') + td('') + td(x.im, 'c') + td('') + td('')
    + td(it[7], it[7].includes('”') ? 'wide-quotes' : '', 'colspan="2"') + '</tr>';
}).join(''));

const at = (c, w, text, cls = '', tag = 'span', row = 1) => `<${tag} class="${cls}" style="grid-area:${row}/${c + 1}/auto/span ${w}">${text}</${tag}>`;
put('ruler', [10, 20, 30, 40].map(n => at(n - 1, 2, n)).join(''));
put('lines', [5, 10, 15, 20].map(n => at(0, 1, n, '', 'span', n)).join(''));
put('canvas', Object.entries(form).flatMap(([r, fs]) => fs.map(f => at(f[0], f[1], f[2] || f[3] || '', f[2] ? 'wide-quotes' : f[3] ? 'val' : 'blank', 'span', r))).join(''));
put('info', at(0, 5, 'PAGE=', 'mono') + at(7, 1, '1', 'mono') + at(9, 5, 'LINE=', 'mono') + at(15, 1, '1', 'mono') + at(18, 7, 'COLUMN=', 'mono') + at(26, 1, '1', 'mono')
  + at(30, 5, '総数=') + at(37, 2, '67', 'mono') + at(41, 8, 'ｱｲﾃﾑ長=') + at(56, 8, '入力順=') + at(71, 6, 'ﾌｫｰﾏｯﾄ') + at(80, 10, 'DEMO201602', 'mono'));
put('keys', [[0, '入力順'], [7, 'ﾌｫｰﾏｯﾄ'], [14, '下移動'], [21, '上移動'], [29, '英数', 'mode', 4], [33, 'ITEM', 'mono'], [40, '削　除'], [47, '表形式'], [54, 'P結合'], [66, 'P分離'], [73, '終　了']]
  .map(([c, t, cls, w = 6]) => at(c, w, t, cls, 'button')).join(''));
```
